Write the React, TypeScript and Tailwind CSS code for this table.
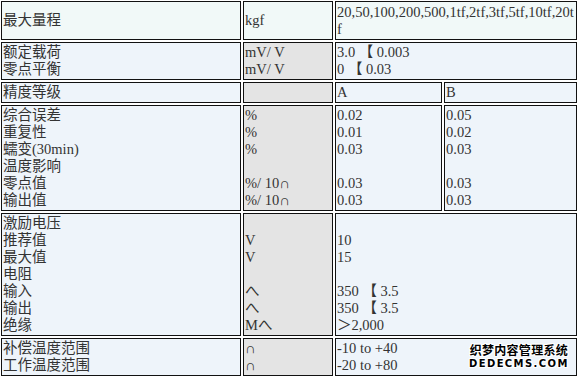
import React from "react";

const font = { fontFamily: '"Liberation Serif", "Noto Sans CJK SC", serif' };

const base = "border border-[#111] px-px py-px text-[14.5px] leading-[17px] text-[#333]";
const td = `${base} align-top`;
const c1 = `${td} bg-[#eef4fa]`;
const c2 = `${td} bg-[#e4e4e4]`;
const c3 = `${td} bg-[#eef4fa]`;

function Lines({ items }: { items: string[] }) {
  return (
    <>
      {items.map((t, i) => (
        <div key={i} className="h-[17px] whitespace-pre">
          {t}
        </div>
      ))}
    </>
  );
}

export default function App() {
  return (
    <div className="relative w-[580px] h-[378px] overflow-hidden bg-white" style={font}>
      <table className="table-fixed border-separate border-spacing-[2px] w-[580px] -ml-px -mt-px">
        <colgroup>
          <col className="w-[240px]" />
          <col className="w-[90px]" />
          <col className="w-[107px]" />
          <col className="w-[133px]" />
        </colgroup>
        <tbody>
          <tr>
            <td className={`${base} align-middle bg-[#f1f9f8]`}>最大量程</td>
            <td className={`${base} align-middle bg-[#f1f9f8]`}>kgf</td>
            <td colSpan={2} className={`${td} bg-[#f1f9f8] break-all leading-[16px] pt-[2px]`}>
              20,50,100,200,500,1tf,2tf,3tf,5tf,10tf,20tf
            </td>
          </tr>
          <tr>
            <td className={c1}>
              <Lines items={["额定载荷", "零点平衡"]} />
            </td>
            <td className={c2}>
              <Lines items={["mV/ V", "mV/ V"]} />
            </td>
            <td colSpan={2} className={c3}>
              <Lines items={["3.0 【 0.003", "0 【 0.03"]} />
            </td>
          </tr>
          <tr>
            <td className={c1}>精度等级</td>
            <td className={c2}></td>
            <td className={c3}>A</td>
            <td className={c3}>B</td>
          </tr>
          <tr>
            <td className={c1}>
              <Lines items={["综合误差", "重复性", "蠕变(30min)", "温度影响", "零点值", "输出值"]} />
            </td>
            <td className={c2}>
              <Lines items={["%", "%", "%", "", "%/ 10∩", "%/ 10∩"]} />
            </td>
            <td className={c3}>
              <Lines items={["0.02", "0.01", "0.03", "", "0.03", "0.03"]} />
            </td>
            <td className={c3}>
              <Lines items={["0.05", "0.02", "0.03", "", "0.03", "0.03"]} />
            </td>
          </tr>
          <tr>
            <td className={c1}>
              <Lines items={["激励电压", "推荐值", "最大值", "电阻", "输入", "输出", "绝缘"]} />
            </td>
            <td className={c2}>
              <Lines items={["", "V", "V", "", "へ", "へ", "Mへ"]} />
            </td>
            <td colSpan={2} className={c3}>
              <Lines items={["", "10", "15", "", "350 【 3.5", "350 【 3.5", "＞2,000"]} />
            </td>
          </tr>
          <tr>
            <td className={c1}>
              <Lines items={["补偿温度范围", "工作温度范围"]} />
            </td>
            <td className={c2}>
              <Lines items={["∩", "∩"]} />
            </td>
            <td colSpan={2} className={c3}>
              <Lines items={["-10 to +40", "-20 to +80"]} />
            </td>
          </tr>
        </tbody>
      </table>
      <div
        className="absolute left-[469px] top-[342px] flex flex-col items-center font-bold text-black"
        style={{
          fontFamily: '"Noto Sans CJK SC", sans-serif',
          textShadow:
            "1px 0 0 #fff, -1px 0 0 #fff, 0 1px 0 #fff, 0 -1px 0 #fff, 1px 1px 0 #fff, -1px -1px 0 #fff, 1px -1px 0 #fff, -1px 1px 0 #fff",
        }}
      >
        <div className="text-[12px] leading-[15px] tracking-[0.3px]">织梦内容管理系统</div>
        <div className="text-[10px] leading-[13px] tracking-[1.4px]" style={{ fontFamily: '"DejaVu Sans", sans-serif' }}>
          DEDECMS.COM
        </div>
      </div>
    </div>
  );
}
